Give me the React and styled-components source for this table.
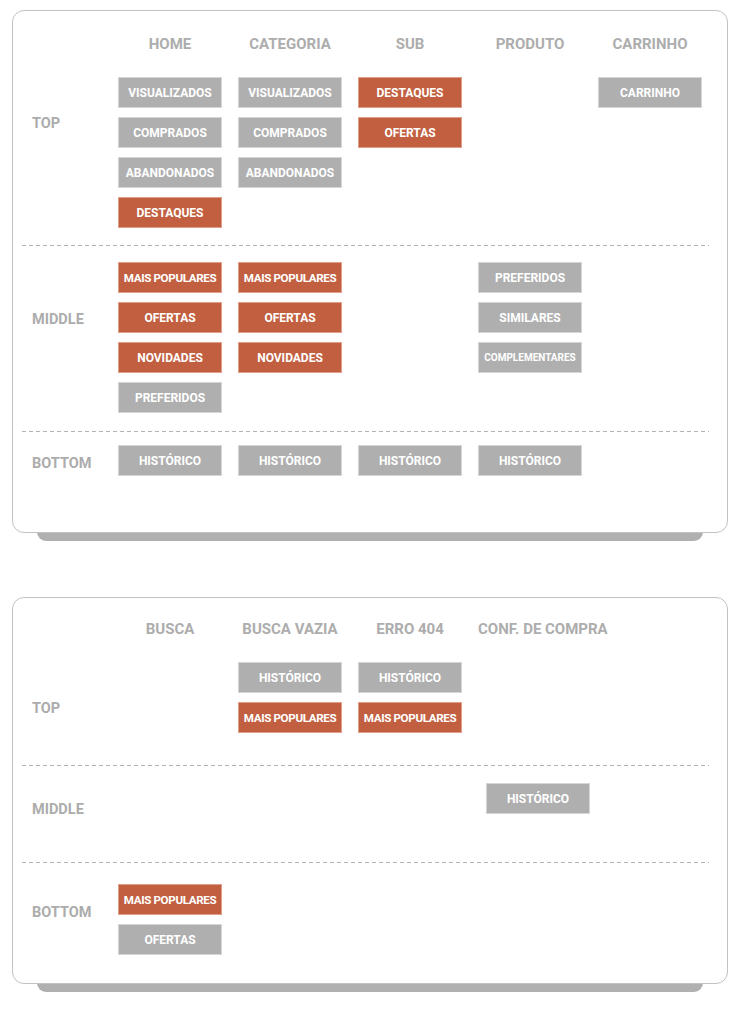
import React from "react";
import styled, { createGlobalStyle } from "styled-components";

const Global = createGlobalStyle`
  html, body { margin: 0; padding: 0; background: #fff; }
  body { font-family: Roboto, "Noto Sans", "DejaVu Sans", sans-serif; }
`;

const Page = styled.div`
  position: relative;
  z-index: 0;
  padding: 10px 0 40px 12px;
  display: flex;
  flex-direction: column;
  gap: 64px;
`;

const Card = styled.section`
  position: relative;
  width: 716px;
  box-sizing: border-box;
  background: #fff;
  border: 1px solid #c2c2c2;
  border-radius: 12px;
  padding-top: ${(p) => p.$padTop}px;
  &::after {
    content: "";
    position: absolute;
    left: 24px;
    right: 24px;
    bottom: -9px;
    height: 24px;
    background: #b0b0b0;
    border-radius: 0 0 9px 9px;
    z-index: -1;
  }
`;

const Row = styled.div`
  display: flex;
  padding-top: ${(p) => p.$padTop || 0}px;
  padding-bottom: ${(p) => p.$padBottom || 0}px;
`;

const LabelCell = styled.div`
  width: 105px;
  flex: none;
  box-sizing: border-box;
  padding-left: 19px;
  padding-top: ${(p) => p.$offset || 0}px;
`;

const RowLabel = styled.div`
  font-size: 14.5px;
  font-weight: 700;
  line-height: 18px;
  color: #acacac;
`;

const Columns = styled.div`
  display: grid;
  grid-template-columns: ${(p) => p.$cols};
  column-gap: 16px;
  align-items: start;
`;

const HeaderText = styled.div`
  font-size: 15px;
  font-weight: 700;
  line-height: 18px;
  color: #adadad;
  text-align: center;
  white-space: nowrap;
`;

const Stack = styled.div`
  display: flex;
  flex-direction: column;
  align-items: center;
  gap: 9px;
`;

const Chip = styled.div`
  width: 104px;
  height: 31px;
  box-sizing: border-box;
  display: flex;
  align-items: center;
  justify-content: center;
  background: ${(p) => (p.$hot ? "#c25f41" : "#afafaf")};
  border: 1px solid ${(p) => (p.$hot ? "#df9f8b" : "#d6d6d6")};
  color: #fff;
  font-size: ${(p) => p.$size || 12}px;
  letter-spacing: ${(p) => p.$ls || 0}px;
  font-weight: 700;
  white-space: nowrap;
`;

const Dashed = styled.div`
  height: 1px;
  margin: 0 18px 0 9px;
  background: repeating-linear-gradient(
    to right,
    #b3b3b3 0 4px,
    transparent 4px 7px
  );
`;

const chipProps = (label) => {
  if (label === "COMPLEMENTARES") return { $size: 10 };
  if (label === "MAIS POPULARES") return { $size: 11.6, $ls: -0.35 };
  return {};
};

const Board = ({ cols, headers, sections, padTop }) => (
  <Card $padTop={padTop}>
    <Row>
      <LabelCell />
      <Columns $cols={cols}>
        {headers.map((h) => (
          <HeaderText key={h}>{h}</HeaderText>
        ))}
      </Columns>
    </Row>
    {sections.map((s, i) => (
      <React.Fragment key={s.name}>
        {i > 0 && <Dashed />}
        <Row $padTop={s.padTop} $padBottom={s.padBottom}>
          <LabelCell $offset={s.labelOffset}>
            <RowLabel>{s.name}</RowLabel>
          </LabelCell>
          <Columns $cols={cols}>
            {s.items.map((col, ci) => (
              <Stack key={ci}>
                {col.map(([label, hot], k) => (
                  <Chip key={k} $hot={hot} {...chipProps(label)}>
                    {label}
                  </Chip>
                ))}
              </Stack>
            ))}
          </Columns>
        </Row>
      </React.Fragment>
    ))}
  </Card>
);

const G = false;
const O = true;

const board1 = {
  cols: "104px 104px 104px 104px 104px",
  headers: ["HOME", "CATEGORIA", "SUB", "PRODUTO", "CARRINHO"],
  padTop: 24,
  sections: [
    {
      name: "TOP",
      padTop: 24,
      padBottom: 17,
      labelOffset: 38,
      items: [
        [
          ["VISUALIZADOS", G],
          ["COMPRADOS", G],
          ["ABANDONADOS", G],
          ["DESTAQUES", O],
        ],
        [
          ["VISUALIZADOS", G],
          ["COMPRADOS", G],
          ["ABANDONADOS", G],
        ],
        [
          ["DESTAQUES", O],
          ["OFERTAS", O],
        ],
        [],
        [["CARRINHO", G]],
      ],
    },
    {
      name: "MIDDLE",
      padTop: 16,
      padBottom: 18,
      labelOffset: 49,
      items: [
        [
          ["MAIS POPULARES", O],
          ["OFERTAS", O],
          ["NOVIDADES", O],
          ["PREFERIDOS", G],
        ],
        [
          ["MAIS POPULARES", O],
          ["OFERTAS", O],
          ["NOVIDADES", O],
        ],
        [],
        [
          ["PREFERIDOS", G],
          ["SIMILARES", G],
          ["COMPLEMENTARES", G],
        ],
        [],
      ],
    },
    {
      name: "BOTTOM",
      padTop: 13,
      padBottom: 56,
      labelOffset: 10,
      items: [
        [["HISTÓRICO", G]],
        [["HISTÓRICO", G]],
        [["HISTÓRICO", G]],
        [["HISTÓRICO", G]],
        [],
      ],
    },
  ],
};

const board2 = {
  cols: "104px 104px 104px 120px",
  headers: ["BUSCA", "BUSCA VAZIA", "ERRO 404", "CONF. DE COMPRA"],
  padTop: 22,
  sections: [
    {
      name: "TOP",
      padTop: 24,
      padBottom: 32,
      labelOffset: 38,
      items: [
        [],
        [
          ["HISTÓRICO", G],
          ["MAIS POPULARES", O],
        ],
        [
          ["HISTÓRICO", G],
          ["MAIS POPULARES", O],
        ],
        [],
      ],
    },
    {
      name: "MIDDLE",
      padTop: 17,
      padBottom: 43,
      labelOffset: 18,
      items: [[], [], [], [["HISTÓRICO", G]]],
    },
    {
      name: "BOTTOM",
      padTop: 21,
      padBottom: 28,
      labelOffset: 20,
      items: [
        [
          ["MAIS POPULARES", O],
          ["OFERTAS", G],
        ],
        [],
        [],
        [],
      ],
    },
  ],
};

export default function App() {
  return (
    <>
      <Global />
      <Page>
        <Board {...board1} />
        <Board {...board2} />
      </Page>
    </>
  );
}
